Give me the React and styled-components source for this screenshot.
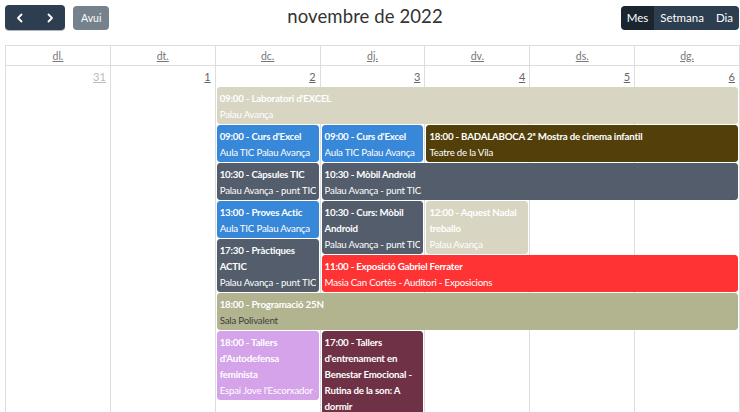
import React from 'react';
import styled, { createGlobalStyle } from 'styled-components';

const GlobalStyle = createGlobalStyle`
  html, body {
    margin: 0;
    padding: 0;
    background: #fff;
    overflow: hidden;
  }
  body {
    font-family: Lato, 'Open Sans', sans-serif;
    color: #212529;
  }
`;

const Page = styled.div`
  padding: 5px 1px 0 5px;
`;

const Toolbar = styled.div`
  display: flex;
  justify-content: space-between;
  align-items: center;
  height: 25px;
  margin-bottom: 15px;
`;

const ToolbarLeft = styled.div`
  display: flex;
  align-items: center;
  gap: 8px;
`;

const ButtonGroup = styled.div`
  display: inline-flex;
  border-radius: 4px;
  overflow: hidden;
  box-shadow: ${p => (p.$focus ? '0 1px 0 0 rgba(76, 91, 106, 0.45)' : 'none')};
`;

const Button = styled.button`
  display: inline-flex;
  align-items: center;
  justify-content: center;
  height: ${p => p.$h || 25}px;
  padding: 0 ${p => p.$px || 8}px;
  border: none;
  border-radius: ${p => (p.$alone ? '4px' : '0')};
  background: ${p => (p.$active ? '#1a252f' : '#2c3e50')};
  opacity: ${p => (p.$disabled ? 0.65 : 1)};
  color: #fff;
  font-family: Lato, sans-serif;
  font-size: ${p => p.$fs || 11.5}px;
  cursor: pointer;
`;

const Title = styled.h2`
  margin: 0 0 3px;
  font-size: 18.5px;
  font-weight: 400;
  color: #333;
  letter-spacing: 0.1px;
`;

const Calendar = styled.div`
  width: 734px;
  border-top: 1px solid #ddd;
  border-left: 1px solid #ddd;
`;

const HeaderRow = styled.div`
  display: grid;
  grid-template-columns: repeat(7, 1fr);
`;

const HeaderCell = styled.div`
  height: 19px;
  display: flex;
  align-items: center;
  justify-content: center;
  border-right: 1px solid #ddd;
  border-bottom: 1px solid #ddd;
  font-size: 10.5px;
  color: #777;
  text-decoration: underline;
`;

const WeekGrid = styled.div`
  display: grid;
  grid-template-columns: repeat(7, 1fr);
  grid-template-rows: 20px 38px 38px 38px 38px 16px 38px 38px auto;
`;

const DayCell = styled.div`
  grid-row: 1 / -1;
  grid-column: ${p => p.$col};
  border-right: 1px solid #ddd;
  display: flex;
  justify-content: flex-end;
  align-items: flex-start;
  padding: 3px 4px 0 0;
  min-height: 360px;
`;

const DayNumber = styled.span`
  font-size: 11px;
  line-height: 16px;
  color: ${p => (p.$other ? '#bbb' : '#666')};
  text-decoration: underline;
`;

const Event = styled.div`
  grid-column: ${p => p.$col} / span ${p => p.$span || 1};
  grid-row: ${p => p.$row} / span ${p => p.$rows || 1};
  align-self: start;
  margin: 1px 2px 0 1px;
  padding: 2px 2px 1px;
  border: 1px solid ${p => p.$bg};
  border-radius: 3px;
  background: ${p => p.$bg};
  color: #fff;
  font-size: 9.7px;
  letter-spacing: -0.2px;
  line-height: 16px;
  overflow: hidden;
  min-width: 0;
`;

const EventTitle = styled.div`
  font-weight: 700;
`;

const EventPlace = styled.div`
  white-space: nowrap;
  overflow: hidden;
  color: ${p => p.$color || '#fff'};
`;

const Chevron = ({ dir }) => (
  <svg width="12" height="12" viewBox="0 0 12 12" fill="none">
    <path
      d={dir === 'left' ? 'M7.5 2.5L4 6l3.5 3.5' : 'M4.5 2.5L8 6 4.5 9.5'}
      stroke="#fff"
      strokeWidth="1.8"
      strokeLinecap="round"
      strokeLinejoin="round"
    />
  </svg>
);

const BLUE = '#3788d8';
const GRAY = '#535d6c';
const BEIGE = '#d8d6c2';

const days = ['dl.', 'dt.', 'dc.', 'dj.', 'dv.', 'ds.', 'dg.'];
const dates = [
  { n: 31, other: true },
  { n: 1 },
  { n: 2 },
  { n: 3 },
  { n: 4 },
  { n: 5 },
  { n: 6 },
];

const events = [
  { col: 3, span: 5, row: 2, title: "09:00 - Laboratori d'EXCEL", place: 'Palau Avança', bg: BEIGE },
  { col: 3, row: 3, title: "09:00 - Curs d'Excel", place: 'Aula TIC Palau Avança', bg: BLUE },
  { col: 4, row: 3, title: "09:00 - Curs d'Excel", place: 'Aula TIC Palau Avança', bg: BLUE },
  { col: 5, span: 3, row: 3, title: '18:00 - BADALABOCA 2ª Mostra de cinema infantil', place: 'Teatre de la Vila', bg: '#523f09' },
  { col: 3, row: 4, title: '10:30 - Càpsules TIC', place: 'Palau Avança - punt TIC', bg: GRAY },
  { col: 4, span: 4, row: 4, title: '10:30 - Mòbil Android', place: 'Palau Avança - punt TIC', bg: GRAY },
  { col: 3, row: 5, title: '13:00 - Proves Actic', place: 'Aula TIC Palau Avança', bg: BLUE },
  { col: 4, row: 5, rows: 2, title: '10:30 - Curs: Mòbil Android', place: 'Palau Avança - punt TIC', bg: GRAY },
  { col: 5, row: 5, rows: 2, title: '12:00 - Aquest Nadal treballo', place: 'Palau Avança', bg: BEIGE },
  { col: 3, row: 6, rows: 2, title: '17:30 - Pràctiques ACTIC', place: 'Palau Avança - punt TIC', bg: GRAY },
  { col: 4, span: 4, row: 7, title: '11:00 - Exposició Gabriel Ferrater', place: 'Masia Can Cortès - Auditori - Exposicions', bg: '#ff3333' },
  { col: 3, span: 5, row: 8, title: '18:00 - Programació 25N', place: 'Sala Polivalent', bg: '#b2b38f', placeColor: '#3f3f3f' },
  { col: 3, row: 9, title: "18:00 - Tallers d'Autodefensa feminista", place: "Espai Jove l'Escorxador - Sala d'actes", bg: '#d4a3e9' },
  { col: 4, row: 9, title: "17:00 - Tallers d'entrenament en Benestar Emocional - Rutina de la son: A dormir", place: 'Espai Jove', bg: '#6e3146' },
];

export default function App() {
  return (
    <Page>
      <GlobalStyle />
      <Toolbar>
        <ToolbarLeft>
          <ButtonGroup $focus>
            <Button $px={9} aria-label="anterior"><Chevron dir="left" /></Button>
            <Button $px={9} aria-label="següent"><Chevron dir="right" /></Button>
          </ButtonGroup>
          <Button $alone $disabled $h={24} $px={8} $fs={10.5}>Avui</Button>
        </ToolbarLeft>
        <Title>novembre de 2022</Title>
        <ButtonGroup>
          <Button $active $h={24} $px={6}>Mes</Button>
          <Button $h={24} $px={6}>Setmana</Button>
          <Button $h={24} $px={6}>Dia</Button>
        </ButtonGroup>
      </Toolbar>

      <Calendar>
        <HeaderRow>
          {days.map(d => (
            <HeaderCell key={d}>{d}</HeaderCell>
          ))}
        </HeaderRow>
        <WeekGrid>
          {dates.map((d, i) => (
            <DayCell key={d.n} $col={i + 1}>
              <DayNumber $other={d.other}>{d.n}</DayNumber>
            </DayCell>
          ))}
          {events.map((e, i) => (
            <Event key={i} $col={e.col} $span={e.span} $row={e.row} $rows={e.rows} $bg={e.bg}>
              <EventTitle>{e.title}</EventTitle>
              <EventPlace $color={e.placeColor}>{e.place}</EventPlace>
            </Event>
          ))}
        </WeekGrid>
      </Calendar>
    </Page>
  );
}
